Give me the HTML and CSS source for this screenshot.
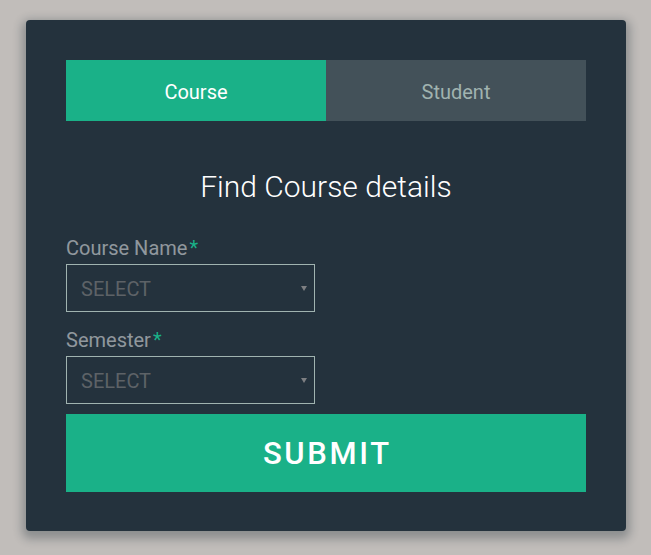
FILE: index.html
```html
<!DOCTYPE html>
<html lang="en">
<head>
<meta charset="utf-8">
<title>Find Course details</title>
<link rel="stylesheet" href="styles.css">
</head>
<body>
<div class="card">
  <div class="tabs">
    <div class="tab active">Course</div>
    <div class="tab">Student</div>
  </div>
  <h1 class="title">Find Course details</h1>
  <form class="form">
    <div class="field">
      <label class="label">Course Name<span class="req">*</span></label>
      <div class="select">
        <span class="placeholder">SELECT</span>
        <svg class="arrow" width="6" height="5" viewBox="0 0 6 5"><path d="M0 0h6L3 5z" fill="#7d7f82"/></svg>
      </div>
    </div>
    <div class="field second">
      <label class="label">Semester<span class="req">*</span></label>
      <div class="select">
        <span class="placeholder">SELECT</span>
        <svg class="arrow" width="6" height="5" viewBox="0 0 6 5"><path d="M0 0h6L3 5z" fill="#7d7f82"/></svg>
      </div>
    </div>
    <button type="button" class="submit">Submit</button>
  </form>
</div>
</body>
</html>
```
FILE: styles.css
```css
* { box-sizing: border-box; }
html, body { margin: 0; padding: 0; }
body {
  background: #c1bdba;
  font-family: Roboto, "Liberation Sans", sans-serif;
  width: 651px;
  height: 555px;
  overflow: hidden;
}
.card {
  margin: 20px 0 0 26px;
  width: 600px;
  height: 511px;
  padding: 40px 40px 39px;
  background: #24323d;
  border-radius: 4px;
  box-shadow: 0 4px 10px 4px rgba(19, 35, 47, 0.3);
}
.tabs {
  display: flex;
  height: 61px;
}
.tab {
  flex: 1;
  display: flex;
  align-items: center;
  justify-content: center;
  font-size: 20px;
  color: #a0b3b0;
  background: #435159;
  padding-top: 2px;
}
.tab.active {
  background: #1ab188;
  color: #ffffff;
}
.title {
  margin: 49px 0 0;
  font-size: 30px;
  line-height: 34px;
  font-weight: 300;
  color: #ffffff;
  text-align: center;
}
.form {
  margin-top: 31px;
  display: flex;
  flex-direction: column;
}
.field.second { margin-top: 15px; }
.label {
  display: block;
  font-size: 20px;
  line-height: 26px;
  color: rgba(255, 255, 255, 0.5);
  margin-bottom: 3px;
}
.req {
  color: #1ab188;
  margin-left: 2px;
}
.select {
  width: 249px;
  height: 48px;
  border: 1px solid #a0b3b0;
  display: flex;
  align-items: center;
  justify-content: space-between;
  padding: 0 7px 0 14px;
}
.placeholder {
  font-size: 20px;
  color: #5d6267;
  padding-top: 1px;
}
.arrow { display: block; margin-top: 1px; }
.submit {
  margin-top: 10px;
  height: 78px;
  width: 100%;
  border: 0;
  background: #1ab188;
  color: #ffffff;
  font-family: Roboto, "Liberation Sans", sans-serif;
  font-size: 31px;
  font-weight: 500;
  letter-spacing: 0.085em;
  text-transform: uppercase;
  padding: 0 0 0 0.085em;
}
```
